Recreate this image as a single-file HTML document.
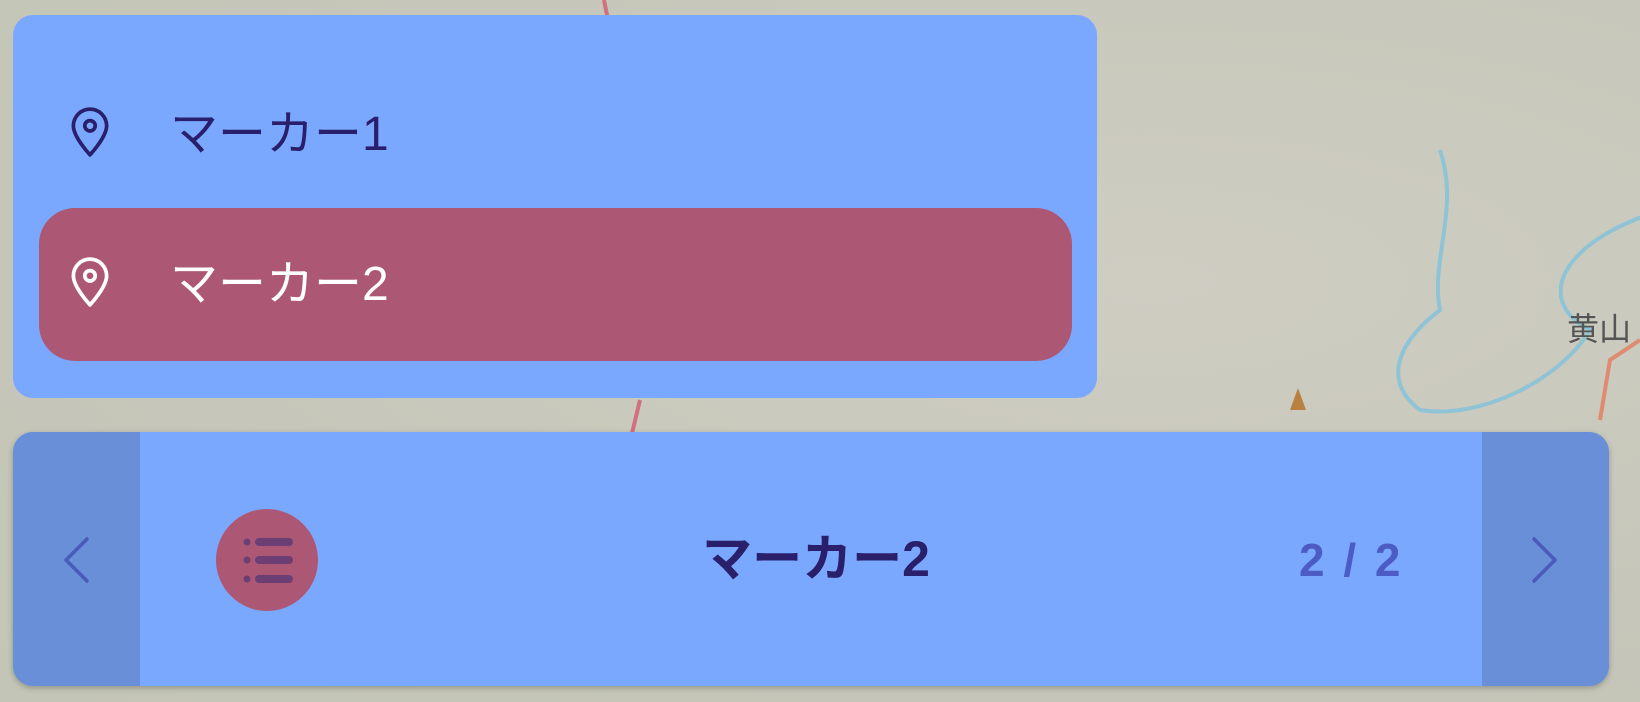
<!DOCTYPE html>
<html><head><meta charset="utf-8"><style>
html,body{margin:0;padding:0;width:1640px;height:702px;overflow:hidden;background:#c9c9bd;font-family:"Liberation Sans","Noto Sans CJK JP",sans-serif;}
.map{position:absolute;left:0;top:0;width:1640px;height:702px;background:radial-gradient(ellipse at 70% 40%,#cfcdc2 0%,#c6c7ba 60%,#c3c5b6 100%);}
.panel{position:absolute;left:13px;top:15px;width:1084px;height:383px;background:#7ba8ff;border-radius:20px;}
.item{position:absolute;left:0;height:152px;font-size:48px;color:#2a1f6b;}
.item svg{position:absolute;left:52px;top:50px;}
.item span{position:absolute;left:157px;top:56px;line-height:1;}
.sel{left:26px;top:193px;width:1033px;height:153px;background:#ac5875;border-radius:36px;color:#fff;}
.bar{position:absolute;left:13px;top:432px;width:1596px;height:254px;background:#7ba8ff;border-radius:20px;overflow:hidden;box-shadow:0 2px 6px rgba(0,0,0,.25);}
.side{position:absolute;top:0;width:127px;height:254px;background:#6a8fd9;}
.circ{position:absolute;left:203px;top:77px;width:102px;height:102px;border-radius:50%;background:#ac5875;}
.title{position:absolute;left:560px;width:486px;text-align:center;top:100px;font-size:50px;font-weight:bold;color:#2a1f6b;line-height:54px;}
.cnt{position:absolute;left:1286px;top:104px;font-size:46px;font-weight:bold;color:#4d5cc4;line-height:48px;word-spacing:4px;letter-spacing:1px;}
</style></head><body>
<div class="map">
<svg width="1640" height="702" style="position:absolute;left:0;top:0">
<path d="M1700 200 C1560 230 1530 300 1590 330 C1560 380 1480 420 1420 410 C1380 380 1400 340 1440 310 C1430 260 1460 210 1440 150" fill="none" stroke="#8fc3d6" stroke-width="4"/>
<path d="M1640 340 L1610 360 L1600 420" fill="none" stroke="#e08a70" stroke-width="4"/>
<path d="M604 0 L612 40 M640 400 L628 450" fill="none" stroke="#d07080" stroke-width="4"/>
<path d="M1290 410 l16 0 l-8 -22 z" fill="#b98040"/>
<text x="1567" y="340" font-size="32" fill="#555" font-family="Noto Sans CJK JP">黄山</text>
</svg>
</div>
<div class="panel">
 <div class="item" style="top:40px;width:1000px">
  <svg width="50" height="54" viewBox="0 0 24 26" fill="none" stroke="#2a1f6b" stroke-width="1.8" stroke-linecap="round" stroke-linejoin="round"><path d="M12 24s-8-8.5-8-14a8 8 0 0 1 16 0C20 15.5 12 24 12 24z"/><circle cx="12" cy="10" r="2.5"/></svg>
  <span>マーカー1</span>
 </div>
 <div class="item sel">
  <svg width="50" height="54" viewBox="0 0 24 26" fill="none" stroke="#fff" stroke-width="1.8" stroke-linecap="round" stroke-linejoin="round" style="left:26px;top:47px"><path d="M12 24s-8-8.5-8-14a8 8 0 0 1 16 0C20 15.5 12 24 12 24z"/><circle cx="12" cy="10" r="2.5"/></svg>
  <span style="left:131px;top:53px">マーカー2</span>
 </div>
</div>
<div class="bar">
 <div class="side" style="left:0"><svg width="127" height="254"><path d="M74 107 L53 128 L74 149" fill="none" stroke="#4a5ab8" stroke-width="3.5" stroke-linecap="round" stroke-linejoin="round"/></svg></div>
 <div class="side" style="left:1469px"><svg width="127" height="254"><path d="M52 107 L73 128 L52 149" fill="none" stroke="#4a5ab8" stroke-width="3.5" stroke-linecap="round" stroke-linejoin="round"/></svg></div>
 <div class="circ"><svg width="102" height="102"><g fill="#6b3f74"><circle cx="31" cy="33" r="3.5"/><circle cx="31" cy="51" r="3.5"/><circle cx="31" cy="70" r="3.5"/><rect x="39" y="29" width="38" height="8" rx="4"/><rect x="39" y="47" width="38" height="8" rx="4"/><rect x="39" y="66" width="38" height="8" rx="4"/></g></svg></div>
 <div class="title">マーカー2</div>
 <div class="cnt">2 / 2</div>
</div>
</body></html>
